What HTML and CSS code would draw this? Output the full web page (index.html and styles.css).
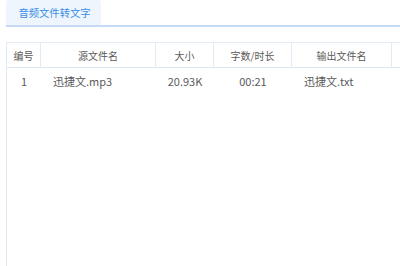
FILE: index.html
```html
<!DOCTYPE html>
<html>
<head>
<meta charset="utf-8">
<link rel="stylesheet" href="styles.css">
</head>
<body>
<div class="page">
  <div class="tabs">
    <div class="tab">音频文件转文字</div>
  </div>
  <div class="table">
    <div class="row head">
      <div class="cell c1">编号</div>
      <div class="cell c2">源文件名</div>
      <div class="cell c3">大小</div>
      <div class="cell c4">字数/时长</div>
      <div class="cell c5">输出文件名</div>
      <div class="cell c6"></div>
    </div>
    <div class="row data">
      <div class="cell c1">1</div>
      <div class="cell c2 left">迅捷文.mp3</div>
      <div class="cell c3">20.93K</div>
      <div class="cell c4">00:21</div>
      <div class="cell c5 left">迅捷文.txt</div>
      <div class="cell c6"></div>
    </div>
  </div>
</div>
</body>
</html>
```

FILE: styles.css
```css
html, body {
  margin: 0;
  padding: 0;
  background: #ffffff;
}
.page {
  width: 400px;
  height: 266px;
  overflow: hidden;
  display: flex;
  flex-direction: column;
  font-family: "Noto Sans CJK SC", "Noto Sans", sans-serif;
  font-size: 11px;
  color: #5a5a5a;
}
.tabs {
  margin-left: 6px;
  height: 25px;
  border-bottom: 2px solid #c4dbf3;
  display: flex;
}
.tab {
  width: 95px;
  height: 25px;
  background: #eef5fd;
  border-radius: 3px 3px 0 0;
  color: #3a8ee6;
  display: flex;
  align-items: center;
  justify-content: center;
  padding-left: 2px;
  box-sizing: border-box;
  font-size: 10.3px;
}
.table {
  margin-top: 15px;
  margin-left: 6px;
  flex: 1;
  border-left: 1px solid #e2e9f5;
  display: flex;
  flex-direction: column;
}
.row {
  display: grid;
  grid-template-columns: 34px 115px 58px 78px 100px 60px;
  height: 24px;
}
.head {
  border-top: 1px solid #e2ebf7;
  border-bottom: 1px solid #dbe7f5;
  font-size: 10px;
}
.head .cell {
  border-right: 1px solid #e2ebf7;
}
.head .c6 {
  border-right: none;
}
.data {
  height: 25px;
}
.cell {
  display: flex;
  align-items: center;
  justify-content: center;
  white-space: nowrap;
  overflow: hidden;
}
.cell.left {
  justify-content: flex-start;
  padding-left: 12px;
}
```
